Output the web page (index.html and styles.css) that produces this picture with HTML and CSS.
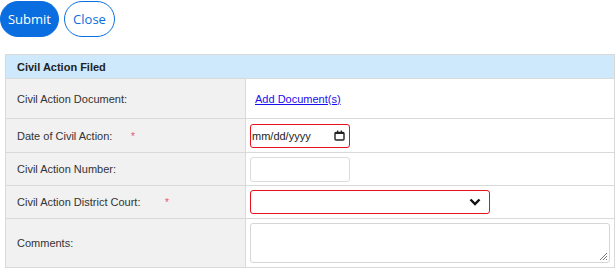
FILE: index.html
```html
<!DOCTYPE html>
<html lang="en">
<head>
    <meta charset="UTF-8">
    <title>Civil Action</title>
    <link rel="stylesheet" href="styles.css">
</head>
<body>
    <div class="actions">
        <button class="btn btn-primary">Submit</button>
        <button class="btn btn-outline">Close</button>
    </div>
    <table class="form-table">
        <tr>
            <th colspan="2">Civil Action Filed</th>
        </tr>
        <tr class="row-doc">
            <td class="label">Civil Action Document:</td>
            <td class="value"><a href="#">Add Document(s)</a></td>
        </tr>
        <tr class="row-date">
            <td class="label"><span class="text w1">Date of Civil Action:</span><span class="req">*</span></td>
            <td class="value"><div class="date-input"><span>mm/dd/yyyy</span><svg width="11" height="11" viewBox="0 0 11 11"><rect x="1" y="2.5" width="9" height="7.5" rx="1" fill="none" stroke="#222" stroke-width="1.4"/><rect x="1" y="2" width="9" height="2" fill="#222"/><rect x="3" y="0.5" width="1.3" height="2.5" fill="#222"/><rect x="6.7" y="0.5" width="1.3" height="2.5" fill="#222"/></svg></div></td>
        </tr>
        <tr class="row-num">
            <td class="label">Civil Action Number:</td>
            <td class="value"><div class="text-input"></div></td>
        </tr>
        <tr class="row-court">
            <td class="label"><span class="text w2">Civil Action District Court:</span><span class="req">*</span></td>
            <td class="value"><div class="select-input"><svg width="12" height="8" viewBox="0 0 12 8"><path d="M1.5 1.5 L6 6 L10.5 1.5" fill="none" stroke="#111" stroke-width="2.4"/></svg></div></td>
        </tr>
        <tr class="row-comments">
            <td class="label">Comments:</td>
            <td class="value"><div class="textarea"><svg width="9" height="9" viewBox="0 0 9 9"><path d="M1 8 L8 1 M4 8 L8 4 M7 8 L8 7" stroke="#666" stroke-width="0.9"/></svg></div></td>
        </tr>
    </table>
</body>
</html>
```

FILE: styles.css
```css
*{
   margin: 0;
   padding: 0;
   box-sizing: border-box;
}
body{
   font-family: "Liberation Sans", Arial, sans-serif;
   background: #fff;
   color: #333;
   width: 615px;
}
.actions{
   display: flex;
   gap: 5px;
   padding-top: 1px;
   height: 54px;
}
.btn{
   height: 36px;
   border-radius: 18px;
   font-family: "Open Sans", "Noto Sans", sans-serif;
   font-size: 13px;
   padding: 0 6px;
}
.btn-primary{
   width: 59px;
   background: #0a6ee0;
   border: 1px solid #0a6ee0;
   color: #fff;
}
.btn-outline{
   width: 51px;
   background: #fff;
   border: 1px solid #0a6ee0;
   color: #0a6ee0;
}
.form-table{
   margin-left: 5px;
   width: 610px;
   border-collapse: collapse;
   font-size: 11px;
}
.form-table th{
   background: #cde9fb;
   border: 1px solid #d9d9d9;
   text-align: left;
   font-weight: bold;
   color: #222;
   height: 24px;
   padding: 0 11px;
}
.form-table td{
   border: 1px solid #d9d9d9;
   vertical-align: middle;
}
.label{
   width: 240px;
   background: #f1f1f1;
   padding: 0 11px;
}
.value{
   padding: 0 4px;
   background: #fff;
}
.text{
   display: inline-block;
}
.w1{ width: 114px; }
.w2{ width: 148px; }
.req{
   color: #f0506e;
   font-size: 10px;
}
.row-doc{ height: 40px; }
.row-date{ height: 34px; }
.row-num{ height: 33px; }
.row-court{ height: 33px; }
.row-comments{ height: 49px; }
.value a{
   color: #1a0dee;
   font-size: 11px;
   margin-left: 5px;
}
.date-input{
   width: 100px;
   height: 24px;
   border: 1px solid #e8111b;
   border-radius: 3px;
   display: flex;
   align-items: center;
   justify-content: space-between;
   padding: 0 4px 0 1px;
   font-size: 11px;
   color: #222;
}
.text-input{
   width: 100px;
   height: 25px;
   border: 1px solid #dcdcdc;
   border-radius: 3px;
}
.select-input{
   width: 240px;
   height: 24px;
   border: 1px solid #e8111b;
   border-radius: 3px;
   display: flex;
   align-items: center;
   justify-content: flex-end;
   padding-right: 8px;
}
.textarea{
   width: 360px;
   height: 40px;
   border: 1px solid #d6d6d6;
   border-radius: 3px;
   display: flex;
   align-items: flex-end;
   justify-content: flex-end;
   padding: 0 1px 1px 0;
}
```
